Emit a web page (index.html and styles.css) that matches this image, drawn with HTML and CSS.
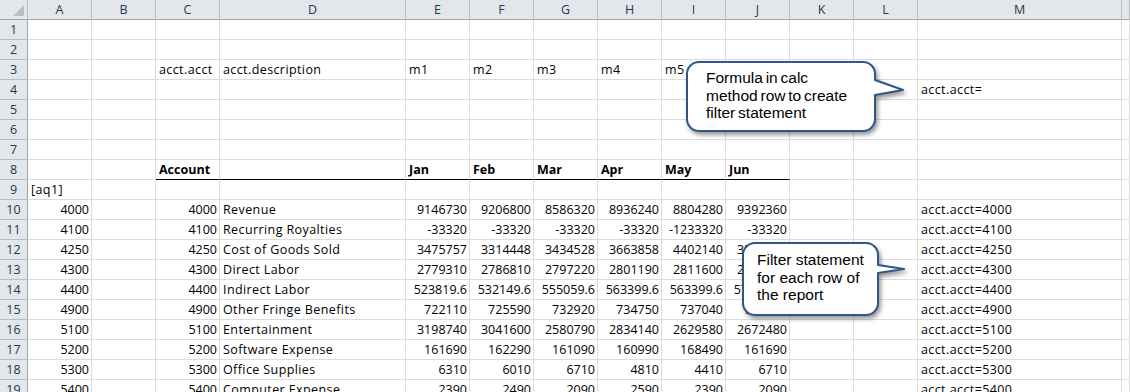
FILE: index.html
```html
<!DOCTYPE html>
<html>
<head>
<meta charset="utf-8">
<link rel="stylesheet" href="styles.css">
</head>
<body>
<div class="sheet">
  <div class="row hdr"><span class="corner"></span><span>A</span><span>B</span><span>C</span><span>D</span><span>E</span><span>F</span><span>G</span><span>H</span><span>I</span><span>J</span><span>K</span><span>L</span><span>M</span><span></span></div>
  <div class="row"><span class="rh">1</span><span></span><span></span><span></span><span></span><span></span><span></span><span></span><span></span><span></span><span></span><span></span><span></span><span></span><span></span></div>
  <div class="row"><span class="rh">2</span><span></span><span></span><span></span><span></span><span></span><span></span><span></span><span></span><span></span><span></span><span></span><span></span><span></span><span></span></div>
  <div class="row"><span class="rh">3</span><span></span><span></span><span>acct.acct</span><span>acct.description</span><span>m1</span><span>m2</span><span>m3</span><span>m4</span><span>m5</span><span></span><span></span><span></span><span></span><span></span></div>
  <div class="row"><span class="rh">4</span><span></span><span></span><span></span><span></span><span></span><span></span><span></span><span></span><span></span><span></span><span></span><span></span><span>acct.acct=</span><span></span></div>
  <div class="row"><span class="rh">5</span><span></span><span></span><span></span><span></span><span></span><span></span><span></span><span></span><span></span><span></span><span></span><span></span><span></span><span></span></div>
  <div class="row"><span class="rh">6</span><span></span><span></span><span></span><span></span><span></span><span></span><span></span><span></span><span></span><span></span><span></span><span></span><span></span><span></span></div>
  <div class="row"><span class="rh">7</span><span></span><span></span><span></span><span></span><span></span><span></span><span></span><span></span><span></span><span></span><span></span><span></span><span></span><span></span></div>
  <div class="row head8"><span class="rh">8</span><span></span><span></span><span class="b u">Account</span><span class="u"></span><span class="b u">Jan</span><span class="b u">Feb</span><span class="b u">Mar</span><span class="b u">Apr</span><span class="b u">May</span><span class="b u">Jun</span><span></span><span></span><span></span><span></span></div>
  <div class="row"><span class="rh">9</span><span>[aq1]</span><span></span><span></span><span></span><span></span><span></span><span></span><span></span><span></span><span></span><span></span><span></span><span></span><span></span></div>
  <div class="row"><span class="rh">10</span><span class="n">4000</span><span></span><span class="n">4000</span><span>Revenue</span><span class="n">9146730</span><span class="n">9206800</span><span class="n">8586320</span><span class="n">8936240</span><span class="n">8804280</span><span class="n">9392360</span><span></span><span></span><span>acct.acct=4000</span><span></span></div>
  <div class="row"><span class="rh">11</span><span class="n">4100</span><span></span><span class="n">4100</span><span>Recurring Royalties</span><span class="n">-33320</span><span class="n">-33320</span><span class="n">-33320</span><span class="n">-33320</span><span class="n">-1233320</span><span class="n">-33320</span><span></span><span></span><span>acct.acct=4100</span><span></span></div>
  <div class="row"><span class="rh">12</span><span class="n">4250</span><span></span><span class="n">4250</span><span>Cost of Goods Sold</span><span class="n">3475757</span><span class="n">3314448</span><span class="n">3434528</span><span class="n">3663858</span><span class="n">4402140</span><span class="n">3562874</span><span></span><span></span><span>acct.acct=4250</span><span></span></div>
  <div class="row"><span class="rh">13</span><span class="n">4300</span><span></span><span class="n">4300</span><span>Direct Labor</span><span class="n">2779310</span><span class="n">2786810</span><span class="n">2797220</span><span class="n">2801190</span><span class="n">2811600</span><span class="n">2817600</span><span></span><span></span><span>acct.acct=4300</span><span></span></div>
  <div class="row"><span class="rh">14</span><span class="n">4400</span><span></span><span class="n">4400</span><span>Indirect Labor</span><span class="n">523819.6</span><span class="n">532149.6</span><span class="n">555059.6</span><span class="n">563399.6</span><span class="n">563399.6</span><span class="n">571739.6</span><span></span><span></span><span>acct.acct=4400</span><span></span></div>
  <div class="row"><span class="rh">15</span><span class="n">4900</span><span></span><span class="n">4900</span><span>Other Fringe Benefits</span><span class="n">722110</span><span class="n">725590</span><span class="n">732920</span><span class="n">734750</span><span class="n">737040</span><span class="n">741390</span><span></span><span></span><span>acct.acct=4900</span><span></span></div>
  <div class="row"><span class="rh">16</span><span class="n">5100</span><span></span><span class="n">5100</span><span>Entertainment</span><span class="n">3198740</span><span class="n">3041600</span><span class="n">2580790</span><span class="n">2834140</span><span class="n">2629580</span><span class="n">2672480</span><span></span><span></span><span>acct.acct=5100</span><span></span></div>
  <div class="row"><span class="rh">17</span><span class="n">5200</span><span></span><span class="n">5200</span><span>Software Expense</span><span class="n">161690</span><span class="n">162290</span><span class="n">161090</span><span class="n">160990</span><span class="n">168490</span><span class="n">161690</span><span></span><span></span><span>acct.acct=5200</span><span></span></div>
  <div class="row"><span class="rh">18</span><span class="n">5300</span><span></span><span class="n">5300</span><span>Office Supplies</span><span class="n">6310</span><span class="n">6010</span><span class="n">6710</span><span class="n">4810</span><span class="n">4410</span><span class="n">6710</span><span></span><span></span><span>acct.acct=5300</span><span></span></div>
  <div class="row"><span class="rh">19</span><span class="n">5400</span><span></span><span class="n">5400</span><span>Computer Expense</span><span class="n">2390</span><span class="n">2490</span><span class="n">2090</span><span class="n">2590</span><span class="n">2390</span><span class="n">2090</span><span></span><span></span><span>acct.acct=5400</span><span></span></div>

  <div class="callout callout-formula">
    <svg class="bubble" width="235" height="90" viewBox="0 0 235 90">
      <path d="M19 7 H183 A12 12 0 0 1 195 19 V25 L223 35 L195 40 V64 A12 12 0 0 1 183 76 H19 A12 12 0 0 1 7 64 V19 A12 12 0 0 1 19 7 Z"/>
    </svg>
    <div class="ctext">Formula in calc<br>method row to create<br>filter statement</div>
  </div>

  <div class="callout callout-filter">
    <svg class="bubble" width="180" height="95" viewBox="0 0 180 95">
      <path d="M20 8 H131 A12 12 0 0 1 143 20 V30 L169 34 L143 38 V68 A12 12 0 0 1 131 80 H20 A12 12 0 0 1 8 68 V20 A12 12 0 0 1 20 8 Z"/>
    </svg>
    <div class="ctext">Filter statement<br>for each row of<br>the report</div>
  </div>
</div>
</body>
</html>
```

FILE: styles.css
```css
html, body {
  margin: 0;
  padding: 0;
  background: #ffffff;
  overflow: hidden;
}

.sheet {
  position: relative;
  width: 1130px;
  height: 392px;
  overflow: hidden;
  font-family: "Open Sans", "Liberation Sans", sans-serif;
  font-size: 12.5px;
  color: #000000;
}

.row {
  display: grid;
  grid-template-columns: 28px 64px 64px 64px 186px repeat(8, 64px) 204px 1fr;
  height: 20px;
}

.row span {
  box-sizing: border-box;
  height: 20px;
  border-right: 1px solid #dadcdd;
  border-bottom: 1px solid #dadcdd;
  padding: 0 2px 0 3px;
  line-height: 19px;
  white-space: nowrap;
  overflow: visible;
  letter-spacing: 0.4px;
}

.row span.n {
  text-align: right;
  letter-spacing: 0;
}

.row span.b {
  font-weight: bold;
  letter-spacing: 0;
}

.row span.u {
  border-bottom-color: #000000;
}

.hdr span {
  background: #e3e7ec;
  border-right-color: #b9bec6;
  border-bottom-color: #9ea5ae;
  text-align: center;
  color: #27384e;
  padding: 0;
  letter-spacing: 0;
}

.hdr span.corner {
  position: relative;
  background: #e3e7ec;
}

.hdr span.corner::after {
  content: "";
  position: absolute;
  right: 3px;
  bottom: 3px;
  width: 0;
  height: 0;
  border-left: 11px solid transparent;
  border-bottom: 11px solid #b8bec6;
}

.row span.rh {
  background: #e3e7ec;
  border-right-color: #9ea5ae;
  border-bottom-color: #b9bec6;
  text-align: center;
  color: #27384e;
  padding: 0;
  letter-spacing: 0;
}

.callout {
  position: absolute;
}

.callout-formula {
  left: 680px;
  top: 55px;
  width: 235px;
  height: 90px;
}

.callout-filter {
  left: 735px;
  top: 235px;
  width: 180px;
  height: 95px;
}

.bubble {
  position: absolute;
  left: 0;
  top: 0;
  filter: drop-shadow(2px 3px 2px rgba(0, 0, 0, 0.4));
}

.bubble path {
  fill: #ffffff;
  stroke: #2f5788;
  stroke-width: 2;
  stroke-linejoin: round;
}

.ctext {
  position: absolute;
  font-family: "Liberation Sans", Arial, sans-serif;
  font-size: 15.5px;
  line-height: 17.5px;
  color: #000000;
  white-space: nowrap;
}

.callout-formula .ctext {
  left: 26px;
  top: 14px;
  word-spacing: -1.5px;
}

.callout-filter .ctext {
  left: 22px;
  top: 16px;
}
```
